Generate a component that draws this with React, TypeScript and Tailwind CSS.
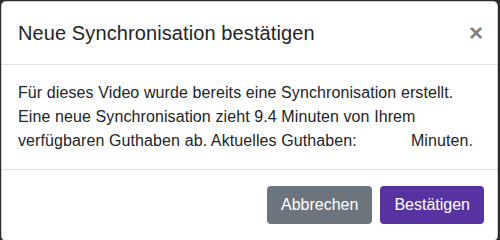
import React from 'react'

export default function App() {
  return (
    <div className="w-[500px] h-[240px] bg-[#2b2b2b] pt-px pl-px overflow-hidden" style={{ fontFamily: '"Liberation Sans", Arial, sans-serif' }}>
      <div className="w-[497px] bg-white border border-black/20 rounded-[5px] text-[#212529]">
        {/* header */}
        <div className="flex items-start justify-between p-4 border-b border-[#dee2e6]">
          <h5 className="text-[20px] leading-[30px] font-normal tracking-[0.1px]">Neue Synchronisation bestätigen</h5>
          <button className="text-[24px] leading-[30px] font-bold text-black opacity-50 -mr-0.5">×</button>
        </div>

        {/* body */}
        <div className="p-4 text-[16px] leading-6 tracking-[0.1px]">
          <span>Für dieses Video wurde bereits eine Synchronisation erstellt.</span>{' '}
          <span>Eine neue Synchronisation zieht 9.4 Minuten von Ihrem</span>{' '}
          <span>verfügbaren Guthaben ab. Aktuelles Guthaben:</span>
          <span className="inline-block ml-[54px]">Minuten.</span>
        </div>

        {/* footer */}
        <div className="flex items-center justify-end gap-2 pl-3 pr-[13px] py-4 border-t border-[#dee2e6]">
          <button className="h-[38px] px-[14px] rounded-[4px] bg-[#6c757d] text-white text-[16px]">Abbrechen</button>
          <button className="h-[38px] px-[14px] rounded-[4px] bg-[#5633a0] text-white text-[16px]">Bestätigen</button>
        </div>
      </div>
    </div>
  )
}
